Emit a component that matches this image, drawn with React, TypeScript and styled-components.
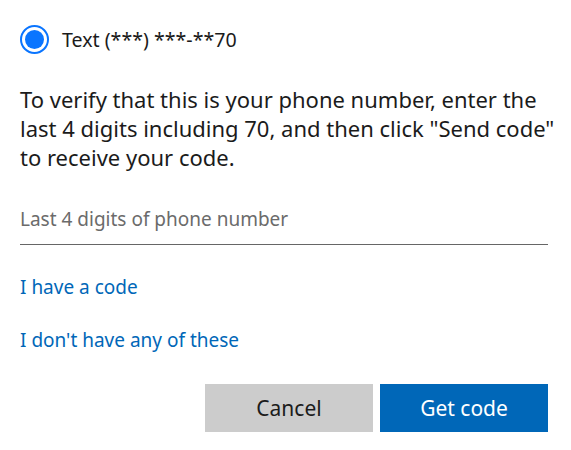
import React, { useState } from "react";
import styled, { createGlobalStyle } from "styled-components";

const GlobalStyle = createGlobalStyle`
  html, body {
    margin: 0;
    padding: 0;
    background: #ffffff;
  }
  body {
    font-family: "Noto Sans", "Open Sans", sans-serif;
    color: #1b1b1b;
  }
`;

const Panel = styled.div`
  width: 528px;
  padding: 24px 23px 18px 20px;
  display: flex;
  flex-direction: column;
`;

const RadioRow = styled.label`
  display: flex;
  align-items: center;
  gap: 13px;
  height: 30px;
  font-size: 19.6px;
  cursor: pointer;
`;

const RadioCircle = styled.span<{ $checked: boolean }>`
  box-sizing: border-box;
  width: 29px;
  height: 29px;
  border-radius: 50%;
  border: 2px solid #0a75ff;
  display: flex;
  align-items: center;
  justify-content: center;

  &::after {
    content: "";
    width: 19px;
    height: 19px;
    border-radius: 50%;
    background: #0a75ff;
    display: ${(p) => (p.$checked ? "block" : "none")};
  }
`;

const Description = styled.p`
  margin: 31px -20px 0 0;
  font-size: 22px;
  line-height: 29px;
`;

const DigitsInput = styled.input`
  margin-top: 34px;
  width: 100%;
  box-sizing: border-box;
  border: none;
  border-bottom: 1px solid #666666;
  padding: 0 0 12px;
  font-family: inherit;
  font-size: 19px;
  color: #1b1b1b;
  outline: none;
  background: transparent;

  &::placeholder {
    color: #6b6b6b;
  }
`;

const Link = styled.a<{ $top: number }>`
  display: block;
  color: #0067b8;
  font-size: 19px;
  text-decoration: none;
  margin-top: ${(p) => p.$top}px;
`;

const Actions = styled.div`
  display: flex;
  justify-content: flex-end;
  gap: 7px;
  margin-top: 31px;
`;

const Button = styled.button<{ $primary?: boolean }>`
  width: 168px;
  height: 48px;
  border: none;
  font-family: inherit;
  font-size: 21px;
  background: ${(p) => (p.$primary ? "#0067b8" : "#cccccc")};
  color: ${(p) => (p.$primary ? "#ffffff" : "#1b1b1b")};
  cursor: pointer;
`;

export default function App() {
  const [checked] = useState(true);
  return (
    <>
      <GlobalStyle />
      <Panel>
        <RadioRow>
          <RadioCircle $checked={checked} />
          Text (***) ***-**70
        </RadioRow>
        <Description>
          To verify that this is your phone number, enter the last 4 digits
          including 70, and then click "Send code" to receive your code.
        </Description>
        <DigitsInput placeholder="Last 4 digits of phone number" />
        <Link href="#" $top={29}>
          I have a code
        </Link>
        <Link href="#" $top={27}>
          I don't have any of these
        </Link>
        <Actions>
          <Button>Cancel</Button>
          <Button $primary>Get code</Button>
        </Actions>
      </Panel>
    </>
  );
}
